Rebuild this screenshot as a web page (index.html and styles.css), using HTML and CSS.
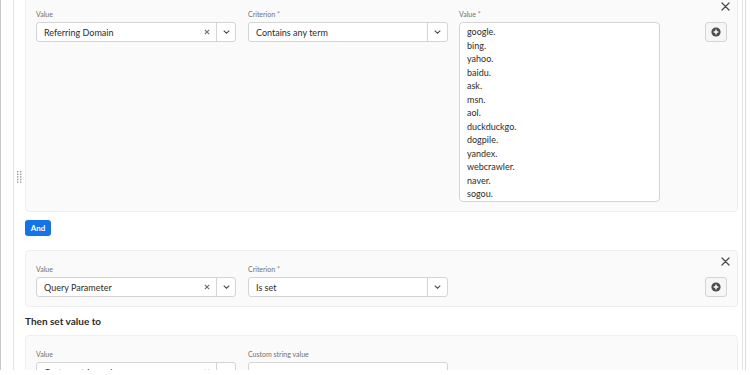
FILE: index.html
```html
<!DOCTYPE html>
<html lang="en">
  <head>
    <meta charset="UTF-8" />
    <meta name="viewport" content="width=device-width, initial-scale=1.0" />
    <title>Rule Builder</title>
    <link rel="stylesheet" href="styles.css">
  </head>
  <body>
    <div class="frame">
      <div class="panel">

        <!-- Condition: referring domain -->
        <div class="card first">
          <span class="handle">
            <svg width="5" height="12" viewBox="0 0 5 12">
              <g fill="#9a9a9a">
                <rect x="0" y="0" width="1.4" height="1.4" /><rect x="3" y="0" width="1.4" height="1.4" />
                <rect x="0" y="2.6" width="1.4" height="1.4" /><rect x="3" y="2.6" width="1.4" height="1.4" />
                <rect x="0" y="5.2" width="1.4" height="1.4" /><rect x="3" y="5.2" width="1.4" height="1.4" />
                <rect x="0" y="7.8" width="1.4" height="1.4" /><rect x="3" y="7.8" width="1.4" height="1.4" />
                <rect x="0" y="10.4" width="1.4" height="1.4" /><rect x="3" y="10.4" width="1.4" height="1.4" />
              </g>
            </svg>
          </span>
          <button class="close" type="button">
            <svg width="9" height="9" viewBox="0 0 9 9"><path d="M1 1L8 8M8 1L1 8" stroke="#4b4b4b" stroke-width="1.3" stroke-linecap="round" /></svg>
          </button>
          <div class="row">
            <div class="field">
              <label>Value</label>
              <div class="combo">
                <span class="combo-text">Referring Domain</span>
                <span class="clear">
                  <svg width="6" height="6" viewBox="0 0 6 6"><path d="M0.8 0.8L5.2 5.2M5.2 0.8L0.8 5.2" stroke="#6e6e6e" stroke-width="1.1" /></svg>
                </span>
                <span class="combo-btn">
                  <svg width="7" height="4" viewBox="0 0 7 4"><path d="M0.7 0.7L3.5 3.2L6.3 0.7" fill="none" stroke="#4b4b4b" stroke-width="1.1" /></svg>
                </span>
              </div>
            </div>
            <div class="field">
              <label>Criterion <span class="req">*</span></label>
              <div class="combo">
                <span class="combo-text">Contains any term</span>
                <span class="combo-btn wide">
                  <svg width="7" height="4" viewBox="0 0 7 4"><path d="M0.7 0.7L3.5 3.2L6.3 0.7" fill="none" stroke="#4b4b4b" stroke-width="1.1" /></svg>
                </span>
              </div>
            </div>
            <div class="field third">
              <label>Value <span class="req">*</span></label>
              <div class="textarea">
                <div>google.</div>
                <div>bing.</div>
                <div>yahoo.</div>
                <div>baidu.</div>
                <div>ask.</div>
                <div>msn.</div>
                <div>aol.</div>
                <div>duckduckgo.</div>
                <div>dogpile.</div>
                <div>yandex.</div>
                <div>webcrawler.</div>
                <div>naver.</div>
                <div>sogou.</div>
              </div>
            </div>
            <button class="add" type="button">
              <svg width="10" height="10" viewBox="0 0 10 10">
                <circle cx="5" cy="5" r="4.6" fill="#4b4b4b" />
                <path d="M5 2.6V7.4M2.6 5H7.4" stroke="#fff" stroke-width="1.4" />
              </svg>
            </button>
          </div>
        </div>

        <button class="and" type="button">And</button>

        <!-- Condition: query parameter -->
        <div class="card">
          <button class="close" type="button">
            <svg width="9" height="9" viewBox="0 0 9 9"><path d="M1 1L8 8M8 1L1 8" stroke="#4b4b4b" stroke-width="1.3" stroke-linecap="round" /></svg>
          </button>
          <div class="row">
            <div class="field">
              <label>Value</label>
              <div class="combo">
                <span class="combo-text">Query Parameter</span>
                <span class="clear">
                  <svg width="6" height="6" viewBox="0 0 6 6"><path d="M0.8 0.8L5.2 5.2M5.2 0.8L0.8 5.2" stroke="#6e6e6e" stroke-width="1.1" /></svg>
                </span>
                <span class="combo-btn">
                  <svg width="7" height="4" viewBox="0 0 7 4"><path d="M0.7 0.7L3.5 3.2L6.3 0.7" fill="none" stroke="#4b4b4b" stroke-width="1.1" /></svg>
                </span>
              </div>
            </div>
            <div class="field">
              <label>Criterion <span class="req">*</span></label>
              <div class="combo">
                <span class="combo-text">Is set</span>
                <span class="combo-btn wide">
                  <svg width="7" height="4" viewBox="0 0 7 4"><path d="M0.7 0.7L3.5 3.2L6.3 0.7" fill="none" stroke="#4b4b4b" stroke-width="1.1" /></svg>
                </span>
              </div>
            </div>
            <button class="add" type="button">
              <svg width="10" height="10" viewBox="0 0 10 10">
                <circle cx="5" cy="5" r="4.6" fill="#4b4b4b" />
                <path d="M5 2.6V7.4M2.6 5H7.4" stroke="#fff" stroke-width="1.4" />
              </svg>
            </button>
          </div>
        </div>

        <h3 class="heading">Then set value to</h3>

        <!-- Action -->
        <div class="card">
          <div class="row">
            <div class="field">
              <label>Value</label>
              <div class="combo">
                <span class="combo-text">Custom string value</span>
                <span class="clear">
                  <svg width="6" height="6" viewBox="0 0 6 6"><path d="M0.8 0.8L5.2 5.2M5.2 0.8L0.8 5.2" stroke="#6e6e6e" stroke-width="1.1" /></svg>
                </span>
                <span class="combo-btn">
                  <svg width="7" height="4" viewBox="0 0 7 4"><path d="M0.7 0.7L3.5 3.2L6.3 0.7" fill="none" stroke="#4b4b4b" stroke-width="1.1" /></svg>
                </span>
              </div>
            </div>
            <div class="field">
              <label>Custom string value</label>
              <div class="combo"></div>
            </div>
          </div>
        </div>

      </div>
    </div>
  </body>
</html>
```

FILE: styles.css
```css
/* General Styles */
body {
  margin: 0;
  padding: 0;
  background: #ffffff;
  font-family: "Lato", "Open Sans", sans-serif;
  color: #2c2c2c;
  overflow: hidden;
}

.frame {
  width: 742px;
  padding: 0 2px 0 12px;
  border-left: 1px solid #c9c9c9;
  border-right: 1px solid #dcdcdc;
  box-sizing: border-box;
  width: 746px;
  height: 375px;
}

.panel {
  height: 100%;
  padding: 0 4px 0 11px;
  border-left: 1px solid #e3e3e3;
  border-right: 1px solid #e3e3e3;
}

/* Cards */
.card {
  position: relative;
  background-color: #fafafa;
  border: 1px solid #efefef;
  border-radius: 4px;
  padding: 12px 10px 9px 10px;
}

.card.first {
  margin-top: -5px;
}

.row {
  display: flex;
  align-items: flex-start;
}

.field {
  width: 200px;
  margin-right: 12px;
}

.field.third {
  width: 201px;
  margin-left: -1px;
}

label {
  display: block;
  font-size: 7px;
  line-height: 12px;
  color: #707070;
  margin-bottom: 2px;
}

.req {
  color: #8a8a8a;
}

/* Combobox */
.combo {
  display: flex;
  align-items: center;
  height: 20px;
  background: #ffffff;
  border: 1px solid #d4d4d4;
  border-radius: 3px;
  box-sizing: border-box;
}

.combo-text {
  flex: 1;
  padding-left: 7px;
  font-size: 9px;
  color: #2c2c2c;
}

.clear {
  display: flex;
  width: 18px;
  justify-content: center;
}

.combo-btn {
  display: flex;
  align-items: center;
  justify-content: center;
  width: 18px;
  height: 100%;
  border-left: 1px solid #d4d4d4;
}

.combo-btn.wide {
  width: 19px;
}

/* Textarea */
.textarea {
  height: 180px;
  box-sizing: border-box;
  padding: 2px 7px;
  background: #ffffff;
  border: 1px solid #d4d4d4;
  border-radius: 4px;
  font-size: 9px;
  line-height: 13.5px;
  color: #2c2c2c;
}

/* Buttons */
.add {
  margin: 14px 0 0 auto;
  width: 22px;
  height: 20px;
  padding: 0;
  display: flex;
  align-items: center;
  justify-content: center;
  background: #f6f6f6;
  border: 1px solid #d4d4d4;
  border-radius: 3px;
}

.close {
  position: absolute;
  top: 6px;
  right: 7px;
  padding: 0;
  border: none;
  background: none;
  display: flex;
}

.handle {
  position: absolute;
  left: -9px;
  top: 175px;
  display: flex;
}

.and {
  display: block;
  margin: 8px 0 14px 0;
  width: 26px;
  height: 16px;
  padding: 0;
  border: none;
  border-radius: 3px;
  background: #1473e6;
  color: #ffffff;
  font-family: "Lato", sans-serif;
  font-size: 8px;
  font-weight: 700;
}

.heading {
  margin: 7px 0;
  font-size: 10px;
  line-height: 14px;
  font-weight: 700;
  color: #2c2c2c;
}
```
